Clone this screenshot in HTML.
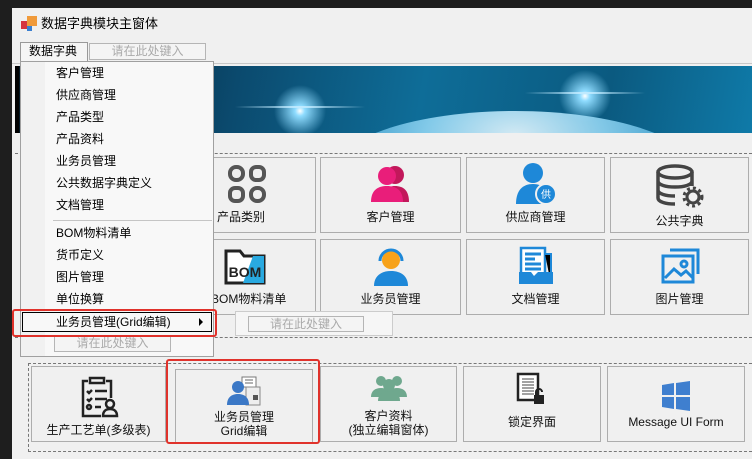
<!DOCTYPE html>
<html><head><meta charset="utf-8"><style>
*{margin:0;padding:0;box-sizing:border-box}
body{width:752px;height:459px;background:#1e1e1e;position:relative;overflow:hidden;font-family:"Liberation Sans","Noto Sans CJK SC",sans-serif;font-size:12px;color:#000}
.a{position:absolute}
.win{left:12px;top:8px;width:740px;height:451px;background:#f0f0f0}
.btn{position:absolute;border:1px solid #adadad;background:#f0f0f0;text-align:center;font-size:12px;color:#111}
.btn svg{position:absolute;left:50%;transform:translateX(-50%)}
.btn span{position:absolute;left:0;right:0;line-height:14px}
.dash{position:absolute;border-top:1px dashed #777;height:0}
.tb{position:absolute;border:1px solid #b5b5b5;background:#f4f4f4;color:#aaa;text-align:center;font-size:12px;line-height:14px}
.mi{position:absolute;left:56px;font-size:12px;line-height:14px}
</style></head><body>
<div class="a win"></div>
<div class="a" style="left:21px;top:21px;width:6px;height:8px;background:#d6343e"></div>
<div class="a" style="left:27px;top:16px;width:10px;height:10px;background:#f09a3a"></div>
<div class="a" style="left:27px;top:26px;width:5px;height:5px;background:#3a7fd0"></div>
<div class="a" style="left:41px;top:16px;font-size:13px;line-height:16px">数据字典模块主窗体</div>
<div class="a" style="left:20px;top:42px;width:68px;height:20px;border:1px solid #999;border-bottom:none;background:#f5f5f5"></div>
<div class="a" style="left:29px;top:44px;font-size:12px;line-height:14px">数据字典</div>
<div class="tb" style="left:89px;top:43px;width:117px;height:17px">请在此处键入</div>
<div class="a" style="left:12px;top:63px;width:740px;height:1px;background:#c8c8c8"></div>
<div class="a" style="left:15px;top:66px;width:737px;height:67px;overflow:hidden;background:radial-gradient(circle at 285px 45px,#fff 0,#8fdcff 5px,transparent 26px),radial-gradient(circle at 570px 30px,#fff 0,#8fdcff 5px,transparent 26px),linear-gradient(100deg,#021522 0%,#0b4a6e 30%,#0e6d98 55%,#0b5a80 80%,#0f7aa8 100%)">
<div class="a" style="left:320px;top:45px;width:360px;height:120px;border-radius:50%;background:radial-gradient(ellipse at 50% 20%,#e8f8ff 0%,#8fd4f2 35%,#3a9ccc 70%);opacity:.9"></div>
<div class="a" style="left:220px;top:40px;width:130px;height:2px;background:linear-gradient(90deg,transparent,#bfeaff,transparent)"></div>
<div class="a" style="left:510px;top:26px;width:120px;height:2px;background:linear-gradient(90deg,transparent,#bfeaff,transparent)"></div>
</div>
<div class="a" style="left:15px;top:66px;width:4px;height:67px;background:#000"></div>
<div class="dash" style="left:15px;top:153px;width:737px"></div>
<div class="dash" style="left:15px;top:337px;width:737px"></div>
<div class="dash" style="left:28px;top:363px;width:724px"></div>
<div class="dash" style="left:28px;top:451px;width:724px"></div>
<div class="a" style="left:28px;top:363px;height:89px;border-left:1px dashed #777"></div>
<div class="btn" style="left:170px;top:157px;width:146px;height:76px">
<svg style="top:6px;left:76px" width="40" height="40" viewBox="0 0 40 40" fill="none" stroke="#555" stroke-width="4"><rect x="3" y="3" width="13" height="13" rx="6"/><rect x="24" y="3" width="13" height="13" rx="5"/><rect x="3" y="24" width="13" height="13" rx="5"/><rect x="24" y="24" width="13" height="13" rx="6"/></svg>
<span style="top:52px;left:46px;right:auto">产品类别</span></div>
<div class="btn" style="left:320px;top:157px;width:141px;height:76px">
<svg style="top:6px" width="44" height="38" viewBox="0 0 44 38"><circle cx="26" cy="11" r="9" fill="#c2185b"/><path d="M12 38c0-12 6-16 14-16s14 4 14 16z" fill="#c2185b"/><circle cx="18" cy="12" r="9" fill="#e91e7a"/><path d="M2 38c0-12 7-16 16-16s16 4 16 16z" fill="#e91e7a"/></svg>
<span style="top:52px">客户管理</span></div>
<div class="btn" style="left:466px;top:157px;width:139px;height:76px">
<svg style="top:4px" width="40" height="42" viewBox="0 0 40 42"><circle cx="17" cy="11" r="10" fill="#1e88d8"/><path d="M0 42c0-14 7-20 17-20 6 0 10 2 13 6v14z" fill="#1e88d8"/><circle cx="30" cy="32" r="10" fill="#1e88d8" stroke="#f0f0f0" stroke-width="2"/><text x="30" y="36" font-size="10" fill="#fff" text-anchor="middle" font-family="Noto Sans CJK SC">供</text></svg>
<span style="top:52px">供应商管理</span></div>
<div class="btn" style="left:610px;top:157px;width:139px;height:76px">
<svg style="top:6px" width="50" height="44" viewBox="0 0 50 44" fill="none" stroke="#444" stroke-width="3.5"><ellipse cx="20" cy="8" rx="17" ry="6"/><path d="M3 8v26c0 4 8 6 17 6M37 8v14M3 17c0 4 8 6 17 6s17-2 17-6M3 26c0 4 8 6 17 6"/><circle cx="38" cy="33" r="6" stroke-width="3"/><circle cx="38" cy="33" r="9" stroke-dasharray="3 3" stroke-width="3"/></svg>
<span style="top:56px">公共字典</span></div>
<div class="btn" style="left:170px;top:239px;width:146px;height:76px">
<svg style="top:6px;left:74px" width="44" height="40" viewBox="0 0 44 40"><path d="M3 5h14l4 5h20v27H3z" fill="#fff" stroke="#222" stroke-width="3"/><path d="M30 10h11v27H20z" fill="#29a9e0"/><text x="22" y="31" font-size="14" font-weight="bold" text-anchor="middle" fill="#222" font-family="Liberation Sans">BOM</text></svg>
<span style="top:52px;left:40px;right:auto">BOM物料清单</span></div>
<div class="btn" style="left:320px;top:239px;width:141px;height:76px">
<svg style="top:6px" width="40" height="40" viewBox="0 0 40 40"><circle cx="20" cy="14" r="9" fill="#f7a21a"/><path d="M9 15a11 11 0 0 1 22 0" fill="none" stroke="#1e88d8" stroke-width="3"/><path d="M3 40c0-10 7-15 17-15s17 5 17 15z" fill="#1e88d8"/></svg>
<span style="top:52px">业务员管理</span></div>
<div class="btn" style="left:466px;top:239px;width:139px;height:76px">
<svg style="top:6px" width="38" height="40" viewBox="0 0 38 40"><rect x="4" y="2" width="24" height="30" fill="#fff" stroke="#1e88d8" stroke-width="2.5"/><path d="M8 8h16M8 13h10M8 18h16M8 23h16" stroke="#1e88d8" stroke-width="3"/><path d="M28 8h6v30" stroke="#1e88d8" stroke-width="2"/><path d="M2 26h12l3 4 4-4h15v12H2z" fill="#1e88d8"/></svg>
<span style="top:52px">文档管理</span></div>
<div class="btn" style="left:610px;top:239px;width:139px;height:76px">
<svg style="top:8px" width="40" height="36" viewBox="0 0 40 36" fill="none" stroke="#1e88d8" stroke-width="3"><path d="M10 2h28v24"/><rect x="3" y="8" width="30" height="26"/><path d="M5 30l9-9 7 6 5-4 7 7"/><circle cx="24" cy="16" r="3"/></svg>
<span style="top:52px">图片管理</span></div>
<div class="a" style="left:370px;top:311px;width:22px;height:25px;background:#fff;border:1px solid #aaa;border-left:none;border-top:none"></div>
<div class="btn" style="left:31px;top:366px;width:135px;height:76px">
<svg style="top:9px" width="40" height="42" viewBox="0 0 40 42" fill="none" stroke="#222" stroke-width="2.5"><path d="M9 5H4v35h18M27 5h5v17"/><rect x="11" y="2" width="14" height="5"/><path d="M8 15l2 2 3-3M16 15h12M8 23l2 2 3-3M16 23h12M16 31h6"/><circle cx="10" cy="31" r="2"/><circle cx="31" cy="28" r="4"/><path d="M24 40c0-5 3-7 7-7s7 2 7 7z"/></svg>
<span style="top:56px">生产工艺单(多级表)</span></div>
<div class="btn" style="left:175px;top:369px;width:138px;height:74px">
<svg style="top:5px" width="36" height="32" viewBox="0 0 36 32"><rect x="16" y="2" width="14" height="10" fill="#fff" stroke="#777"/><path d="M19 5h8M19 8h8" stroke="#666"/><rect x="20" y="12" width="14" height="18" fill="#eee" stroke="#888"/><rect x="27" y="20" width="5" height="5" fill="#555"/><circle cx="12" cy="12" r="6" fill="#3b78c6"/><path d="M1 30c0-8 5-11 11-11s11 3 11 11z" fill="#3b78c6"/></svg>
<span style="top:40px">业务员管理<br>Grid编辑</span></div>
<div class="btn" style="left:320px;top:366px;width:137px;height:76px">
<svg style="top:6px" width="36" height="28" viewBox="0 0 36 28" fill="#6fa88e"><circle cx="10" cy="8" r="5"/><circle cx="26" cy="8" r="5"/><circle cx="18" cy="12" r="6"/><path d="M0 24c0-6 4-9 10-9 6 0 10 3 10 9zM16 24c0-6 4-9 10-9s10 3 10 9z"/><path d="M7 28c0-7 5-10 11-10s11 3 11 10z"/></svg>
<span style="top:42px">客户资料<br>(独立编辑窗体)</span></div>
<div class="btn" style="left:463px;top:366px;width:138px;height:76px">
<svg style="top:5px" width="32" height="34" viewBox="0 0 32 34"><rect x="2" y="2" width="20" height="26" fill="#fff" stroke="#222" stroke-width="2.5"/><path d="M6 7h12M6 10h12M6 13h12M6 16h12M6 19h12M6 22h12" stroke="#444"/><rect x="18" y="23" width="10" height="9" fill="#222"/><path d="M20 23v-3a3 3 0 0 1 6 0" stroke="#222" stroke-width="2" fill="none"/></svg>
<span style="top:48px">锁定界面</span></div>
<div class="btn" style="left:607px;top:366px;width:138px;height:76px">
<svg style="top:14px" width="30" height="30" viewBox="0 0 30 30" fill="#3f7fcf"><path d="M1 4l12-2v12H1zM15 2l14-2v14H15zM1 16h12v12L1 26zM15 16h14v14l-14-2z"/></svg>
<span style="top:48px">Message UI Form</span></div>
<div class="a" style="left:166px;top:359px;width:154px;height:85px;border:2px solid #e0322b;border-radius:3px"></div>
<div class="a" style="left:20px;top:61px;width:194px;height:296px;background:#f8f8f8;border:1px solid #a0a0a0"></div>
<div class="a" style="left:21px;top:62px;width:24px;height:294px;background:#f1f1f1"></div>
<div class="a" style="left:53px;top:220px;width:159px;height:1px;background:#c5c5c5"></div>
<div class="mi" style="top:66px">客户管理</div>
<div class="mi" style="top:88px">供应商管理</div>
<div class="mi" style="top:110px">产品类型</div>
<div class="mi" style="top:132px">产品资料</div>
<div class="mi" style="top:154px">业务员管理</div>
<div class="mi" style="top:176px">公共数据字典定义</div>
<div class="mi" style="top:198px">文档管理</div>
<div class="mi" style="top:226px">BOM物料清单</div>
<div class="mi" style="top:248px">货币定义</div>
<div class="mi" style="top:270px">图片管理</div>
<div class="mi" style="top:292px">单位换算</div>
<div class="a" style="left:22px;top:312px;width:190px;height:20px;border:1px solid #000;background:#f8f8f8"></div>
<div class="mi" style="top:315px">业务员管理(Grid编辑)</div>
<div class="a" style="left:199px;top:318px;width:0;height:0;border-left:4px solid #000;border-top:4px solid transparent;border-bottom:4px solid transparent"></div>
<div class="tb" style="left:54px;top:335px;width:117px;height:17px">请在此处键入</div>
<div class="a" style="left:12px;top:309px;width:205px;height:28px;border:2px solid #e0322b;border-radius:3px"></div>
<div class="a" style="left:235px;top:311px;width:158px;height:25px;background:#f6f6f6;border:1px solid #ccc"></div>
<div class="tb" style="left:248px;top:316px;width:116px;height:16px">请在此处键入</div>
</body></html>
